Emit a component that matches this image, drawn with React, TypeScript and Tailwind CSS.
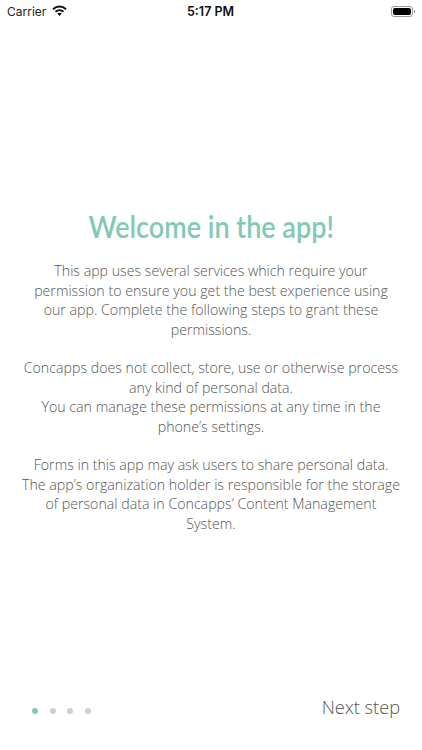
import React from "react";

const paragraphs = [
  ["This app uses several services which require your", "permission to ensure you get the best experience using", "our app. Complete the following steps to grant these", "permissions."],
  ["Concapps does not collect, store, use or otherwise process", "any kind of personal data.", "You can manage these permissions at any time in the", "phone’s settings."],
  ["Forms in this app may ask users to share personal data.", "The app’s organization holder is responsible for the storage", "of personal data in Concapps’ Content Management", "System."],
];

function StatusBar() {
  return (
    <div className="relative flex h-[22px] items-center justify-between pl-[7px] pr-[7px] text-[#111] font-['Inter',sans-serif] text-[12px]">
      <div className="flex items-center gap-[6px]">
        <span className="pt-[1px] text-[#222]">Carrier</span>
        <svg width="15" height="12" viewBox="0 0 15 12" className="mb-[1px]">
          <path d="M1 4.200C4.800.6 10.200.6 14 4.200" fill="none" stroke="#111" strokeWidth="2" />
          <path d="M3.500 6.800C5.800 4.700 9.200 4.700 11.500 6.800" fill="none" stroke="#111" strokeWidth="2" />
          <path d="M5.200 8.600C6.500 7.300 8.500 7.300 9.800 8.600L7.500 11z" fill="#111" />
        </svg>
      </div>
      <span className="absolute left-[187px] top-[3px] font-semibold text-[12.5px] leading-[18px]">5:17 PM</span>
      <div className="flex items-center gap-[1px]">
        <div className="h-[11px] w-[22px] rounded-[3px] border border-[#999] p-[1px]">
          <div className="h-full w-full rounded-[2px] bg-black" />
        </div>
        <div className="h-[3px] w-[1px] bg-[#999]" />
      </div>
    </div>
  );
}

export default function App() {
  return (
    <div className="flex h-[750px] w-[422px] flex-col bg-white">
      <StatusBar />
      <main className="flex flex-1 flex-col items-center pt-[174px] text-center">
        <h1 className="scale-x-[0.9] whitespace-nowrap font-['Lato',sans-serif] text-[30px] font-semibold leading-[60px] text-[#83c9b5]">Welcome in the app!</h1>
        <div className="mt-[5px] flex flex-col gap-[19px] font-['Open_Sans',sans-serif] text-[14.2px] font-light leading-[19.5px] text-[#555]">
          {paragraphs.map((lines, i) => (
            <p key={i}>
              {lines.map((line) => (
                <span key={line} className="block whitespace-nowrap">{line}</span>
              ))}
            </p>
          ))}
        </div>
      </main>
      <footer className="flex h-[56px] items-start justify-between pl-[32px] pr-[22px]">
        <div className="mt-[14px] flex gap-[11.7px]">
          <span className="h-[6px] w-[6px] rounded-full bg-[#83c9b5]" />
          <span className="h-[6px] w-[6px] rounded-full bg-[#cfcfcf]" />
          <span className="h-[6px] w-[6px] rounded-full bg-[#cfcfcf]" />
          <span className="h-[6px] w-[6px] rounded-full bg-[#cfcfcf]" />
        </div>
        <span className="font-['Open_Sans',sans-serif] text-[18.2px] font-light leading-[26px] text-[#555]">Next step</span>
      </footer>
    </div>
  );
}
